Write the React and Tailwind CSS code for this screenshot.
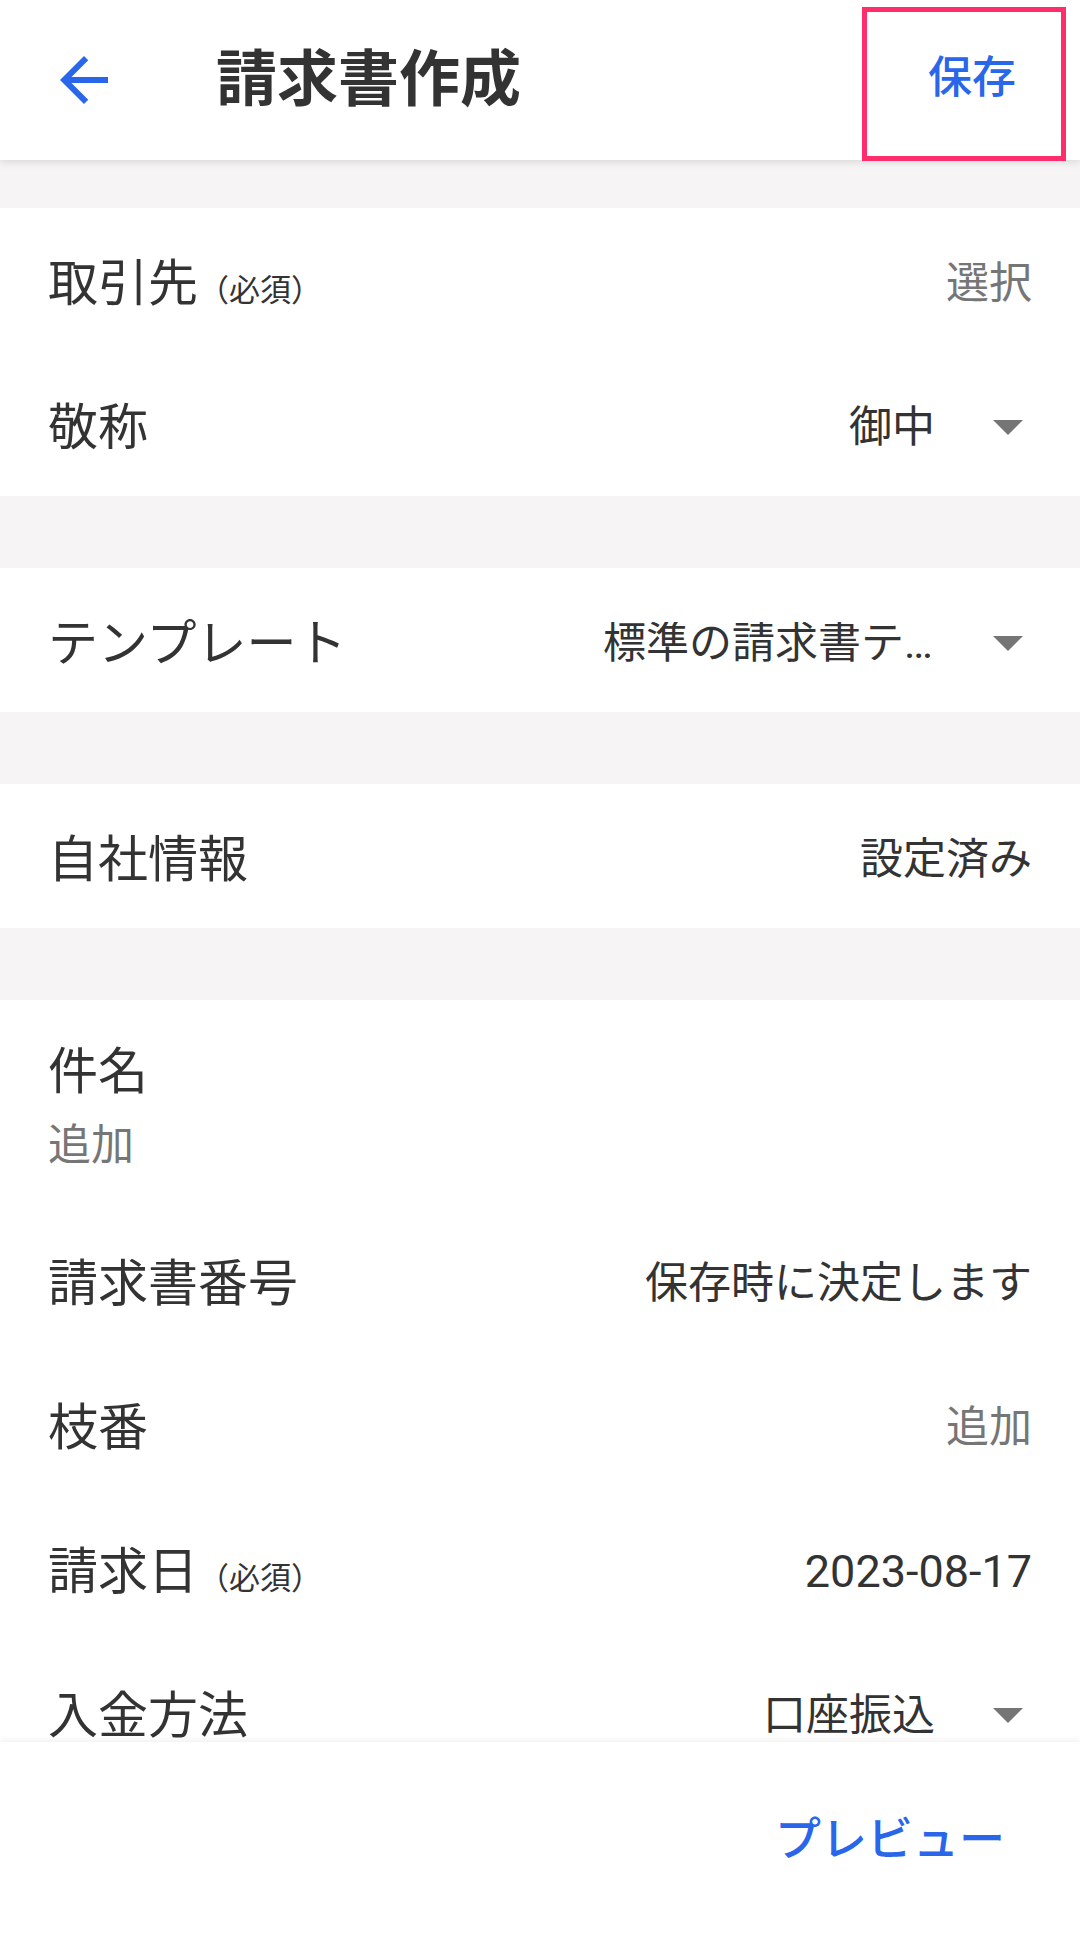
import React from 'react';

const FONT = { fontFamily: 'Roboto, "Noto Sans CJK JP", sans-serif' };

function Caret({ className = 'ml-[58px]' }) {
  return (
    <svg viewBox="0 0 30 15" className={`${className} mr-[9px] h-[15px] w-[30px] shrink-0`}>
      <path d="M0 0h30L15 15z" fill="#757575" />
    </svg>
  );
}

function Label({ children, required }) {
  return (
    <div className="flex items-baseline">
      <span className="text-[50px] leading-none text-[#333]">{children}</span>
      {required && <span className="text-[31px] leading-none text-[#333]">（必須）</span>}
    </div>
  );
}

function Row({ label, required, value, muted, select, valueSize = 'text-[43px]' }) {
  return (
    <div className="flex h-[144px] items-center justify-between px-12 pt-[7px]">
      <Label required={required}>{label}</Label>
      <div className="flex items-center">
        <span className={`${valueSize} leading-none ${muted ? 'text-[#767676]' : 'text-[#333]'}`}>{value}</span>
        {select && <Caret />}
      </div>
    </div>
  );
}

function Gap({ h = 'h-[72px]' }) {
  return <div className={h} />;
}

export default function App() {
  return (
    <div className="relative flex h-[1936px] w-[1080px] flex-col overflow-hidden bg-[#f6f4f5]" style={FONT}>
      {/* App bar */}
      <header className="relative z-10 flex h-[160px] shrink-0 items-center bg-white shadow-[0_2px_8px_rgba(0,0,0,0.12)]">
        <button className="ml-12 flex h-[72px] w-[72px] items-center justify-center" aria-label="戻る">
          <svg viewBox="0 0 24 24" className="h-[72px] w-[72px]" fill="#2a66e9">
            <path d="M20 11H7.83l5.59-5.59L12 4l-8 8 8 8 1.41-1.41L7.83 13H20v-2z" />
          </svg>
        </button>
        <h1 className="ml-[96px] text-[61px] font-bold leading-none text-[#333]">請求書作成</h1>
        <button className="ml-auto mr-[64px] pb-1 text-[44px] font-medium leading-none text-[#2a66e9]">保存</button>
        {/* highlight */}
        <div className="pointer-events-none absolute left-[862px] top-[7px] h-[154px] w-[204px] border-[5px] border-[#ff2d6b]" />
      </header>

      {/* Form */}
      <main className="flex-1 overflow-hidden">
        <Gap h="h-[48px]" />
        <section className="bg-white">
          <Row label="取引先" required value="選択" muted />
          <Row label="敬称" value="御中" select />
        </section>
        <Gap />
        <section className="bg-white">
          <div className="flex h-[144px] items-center justify-between px-12 pt-[7px]">
            <Label>テンプレート</Label>
            <div className="flex items-center">
              <span className="w-[340px] truncate text-[43px] leading-none text-[#333]">標準の請求書テンプレート</span>
              <Caret className="ml-[50px]" />
            </div>
          </div>
        </section>
        <Gap />
        <section className="bg-white">
          <Row label="自社情報" value="設定済み" />
        </section>
        <Gap />
        <section className="bg-white">
          <div className="flex h-[208px] flex-col items-start px-12 pt-[47px]">
            <Label>件名</Label>
            <span className="mt-[27px] text-[43px] leading-none text-[#767676]">追加</span>
          </div>
          <Row label="請求書番号" value="保存時に決定します" />
          <Row label="枝番" value="追加" muted />
          <Row label="請求日" required value="2023-08-17" valueSize="text-[45px]" />
          <Row label="入金方法" value="口座振込" select />
        </section>
      </main>

      {/* Bottom bar */}
      <footer className="relative z-10 flex h-[194px] shrink-0 items-center justify-end bg-white pr-[75px] shadow-[0_-2px_6px_rgba(0,0,0,0.06)]">
        <button className="text-[46px] font-medium leading-none text-[#2a66e9]">プレビュー</button>
      </footer>
    </div>
  );
}
